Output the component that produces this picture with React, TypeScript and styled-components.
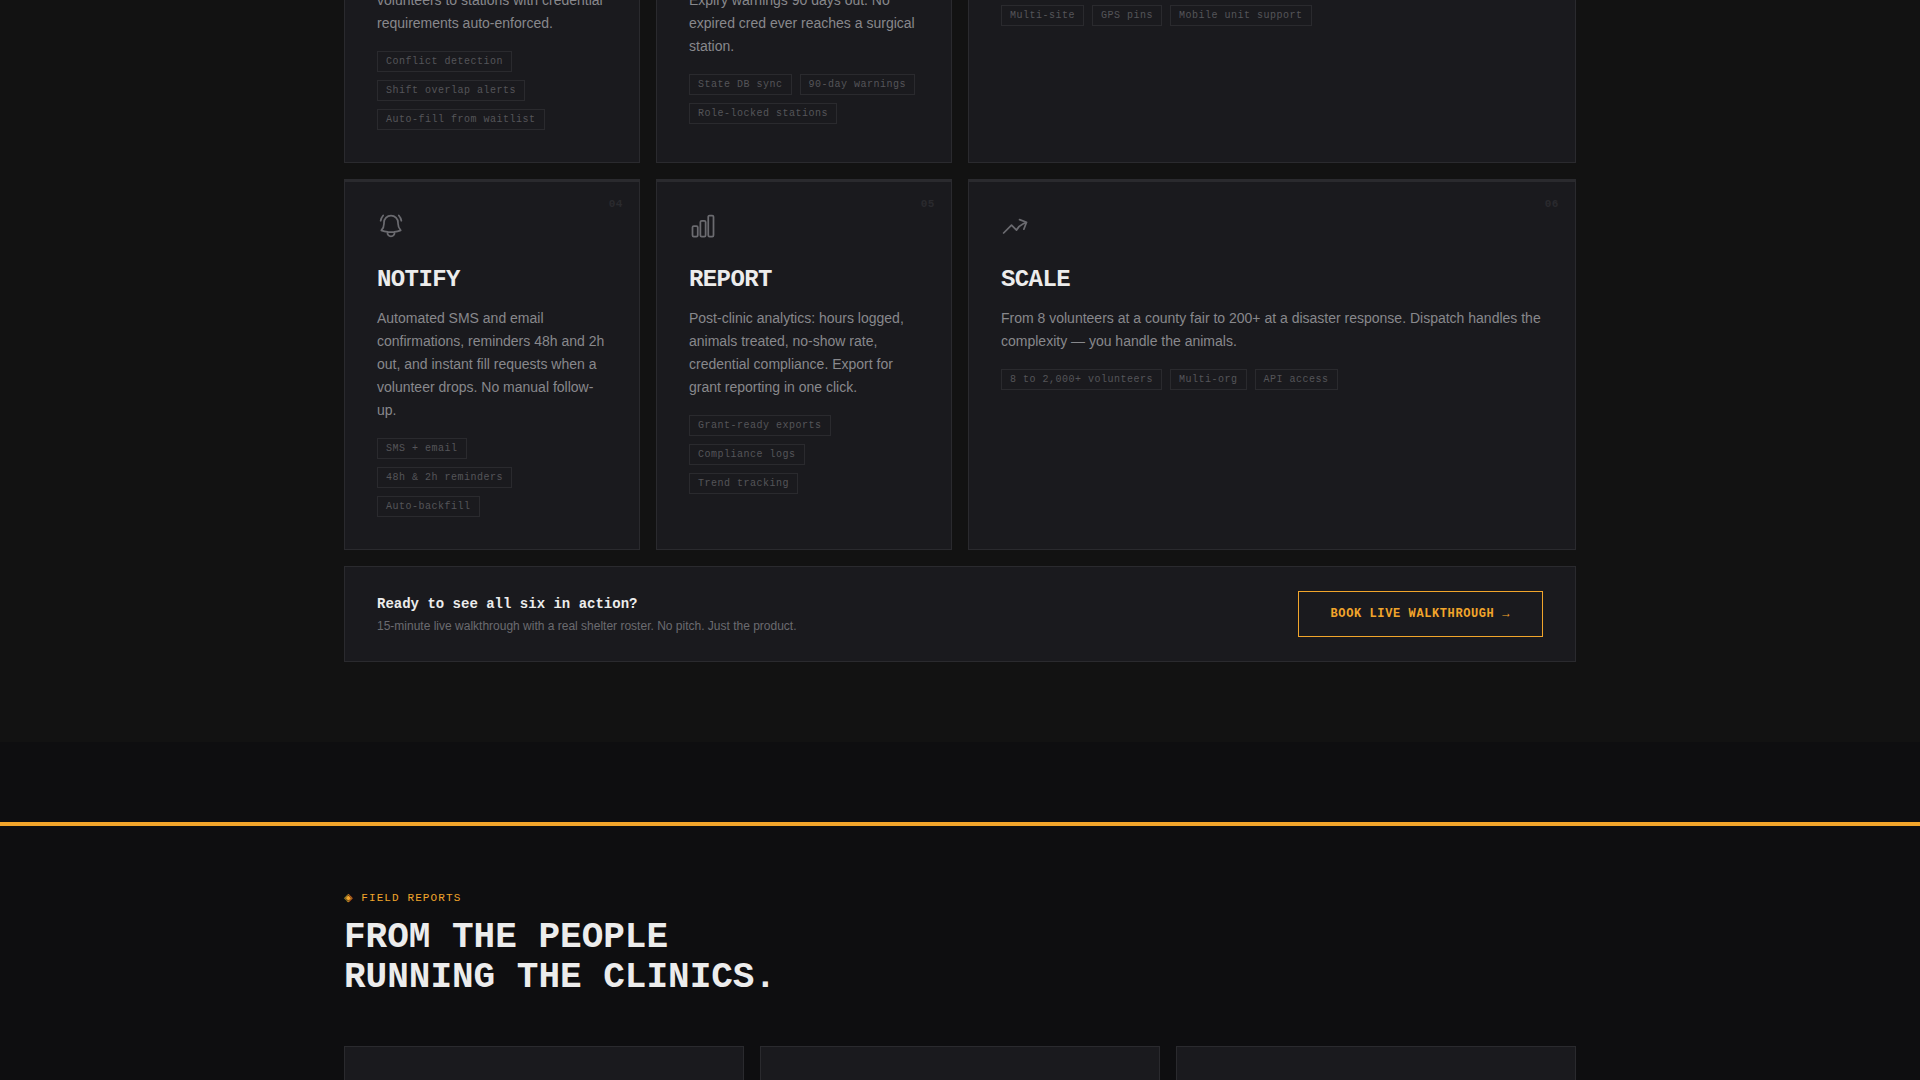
import React from "react";
import styled, { createGlobalStyle, css } from "styled-components";
import {
  HiOutlineArrowTrendingUp,
  HiOutlineBellAlert,
  HiOutlineChartBar,
} from "react-icons/hi2";

const color = {
  ink: "#0e0e10",
  band: "#121212",
  card: "#1a1a1e",
  line: "#2a2a2e",
  amber: "#f2a52b",
  bright: "#ececec",
  text: "#88888c",
  muted: "#6b6b70",
  faint: "#555559",
};

const sans = `"Liberation Sans", Arial, sans-serif`;
const mono = `"Liberation Mono", "Courier New", "DejaVu Sans", monospace`;

const GlobalStyle = createGlobalStyle`
  *, *::before, *::after { box-sizing: border-box; }
  body { margin: 0; background: ${color.ink}; color: ${color.bright}; font-family: ${sans}; }
  h2, h3, p, ul { margin: 0; padding: 0; }
  ul { list-style: none; }
`;

const Page = styled.div`
  display: flex;
  flex-direction: column;
  min-height: 100vh;
`;

const Features = styled.section`
  padding-bottom: 80px;
  background: ${color.band};
`;

const container = css`
  width: 100%;
  max-width: 1280px;
  margin: 0 auto;
  padding: 0 24px;
`;

const FeatureGrid = styled.div`
  ${container}
  display: grid;
  grid-template-columns: repeat(4, 1fr);
  gap: 16px;
`;

const Card = styled.article<{ $wide?: boolean; $continued?: boolean }>`
  position: relative;
  display: flex;
  flex-direction: column;
  padding: 32px;
  background: ${color.card};
  border: 1px solid ${color.line};
  ${(p) => p.$wide && "grid-column: span 2;"}
  ${(p) =>
    p.$continued
      ? "border-top: 0; padding-top: 0;"
      : `&::before {
          content: "";
          position: absolute;
          inset: 0 0 auto;
          height: 2px;
          background: ${color.line};
        }`}
`;

const CardNumber = styled.span`
  position: absolute;
  top: 16px;
  right: 16px;
  color: ${color.line};
  font: 700 11px/16px ${mono};
  letter-spacing: 0.05em;
`;

const IconSlot = styled.div`
  height: 28px;
  margin-bottom: 24px;
  color: ${color.muted};

  svg {
    display: block;
    width: 28px;
    height: 28px;
  }
`;

const CardTitle = styled.h3`
  margin-bottom: 11px;
  font: 700 24px/32px ${mono};
  letter-spacing: -0.025em;
`;

const CardText = styled.p<{ $continued?: boolean }>`
  margin: ${(p) => (p.$continued ? "-11px" : "0")} 0 16px;
  color: ${color.text};
  font-size: 14px;
  line-height: 23px;
`;

const TagList = styled.ul<{ $first?: boolean }>`
  display: flex;
  flex-wrap: wrap;
  gap: 8px;
  padding-top: ${(p) => (p.$first ? "5px" : "0")};
`;

const Tag = styled.li`
  padding: 2px 8px;
  border: 1px solid ${color.line};
  color: ${color.faint};
  font: 10px/15px ${mono};
  letter-spacing: 0.05em;
`;

const Cta = styled.aside`
  grid-column: 1 / -1;
  display: flex;
  align-items: center;
  justify-content: space-between;
  gap: 24px;
  padding: 24px 32px;
  background: ${color.card};
  border: 1px solid ${color.line};
`;

const CtaTitle = styled.p`
  margin-bottom: 4px;
  font: 700 14px/20px ${mono};
`;

const CtaNote = styled.p`
  color: ${color.muted};
  font-size: 12px;
  line-height: 16px;
`;

const CtaButton = styled.button`
  padding: 14px 32px;
  border: 1px solid ${color.amber};
  background: transparent;
  color: ${color.amber};
  font: 700 12px/16px ${mono};
  letter-spacing: 0.05em;
  white-space: nowrap;
  cursor: pointer;
`;

const Reports = styled.section`
  flex: 1;
  display: flex;
  flex-direction: column;
  margin-top: 80px;
  padding-top: 64px;
  border-top: 4px solid ${color.amber};
`;

const ReportsHeader = styled.header`
  ${container}
  margin-bottom: 48px;
`;

const Eyebrow = styled.p`
  margin-bottom: 12px;
  color: ${color.amber};
  font: 11px/16px ${mono};
  letter-spacing: 0.1em;
`;

const Heading = styled.h2`
  font: 700 36px/40px ${mono};
`;

const ReportGrid = styled.div`
  ${container}
  flex: 1;
  display: grid;
  grid-template-columns: repeat(3, 1fr);
  gap: 16px;
  min-height: 34px;
`;

const ReportCard = styled.article`
  background: ${color.card};
  border: 1px solid ${color.line};
  border-bottom: 0;
`;

type Feature = {
  number?: string;
  icon?: React.ReactNode;
  title?: string;
  text?: string;
  tags: string[];
  wide?: boolean;
};

const features: Feature[] = [
  {
    text: "volunteers to stations with credential requirements auto-enforced.",
    tags: ["Conflict detection", "Shift overlap alerts", "Auto-fill from waitlist"],
  },
  {
    text: "Expiry warnings 90 days out. No expired cred ever reaches a surgical station.",
    tags: ["State DB sync", "90-day warnings", "Role-locked stations"],
  },
  {
    tags: ["Multi-site", "GPS pins", "Mobile unit support"],
    wide: true,
  },
  {
    number: "04",
    icon: <HiOutlineBellAlert />,
    title: "NOTIFY",
    text: "Automated SMS and email confirmations, reminders 48h and 2h out, and instant fill requests when a volunteer drops. No manual follow-up.",
    tags: ["SMS + email", "48h & 2h reminders", "Auto-backfill"],
  },
  {
    number: "05",
    icon: <HiOutlineChartBar />,
    title: "REPORT",
    text: "Post-clinic analytics: hours logged, animals treated, no-show rate, credential compliance. Export for grant reporting in one click.",
    tags: ["Grant-ready exports", "Compliance logs", "Trend tracking"],
  },
  {
    number: "06",
    icon: <HiOutlineArrowTrendingUp />,
    title: "SCALE",
    text: "From 8 volunteers at a county fair to 200+ at a disaster response. Dispatch handles the complexity — you handle the animals.",
    tags: ["8 to 2,000+ volunteers", "Multi-org", "API access"],
    wide: true,
  },
];

function FeatureCard({ number, icon, title, text, tags, wide }: Feature) {
  const continued = !title;
  return (
    <Card $wide={wide} $continued={continued}>
      {number && <CardNumber>{number}</CardNumber>}
      {icon && <IconSlot>{icon}</IconSlot>}
      {title && <CardTitle>{title}</CardTitle>}
      {text && <CardText $continued={continued}>{text}</CardText>}
      <TagList $first={!text}>
        {tags.map((tag) => (
          <Tag key={tag}>{tag}</Tag>
        ))}
      </TagList>
    </Card>
  );
}

export default function App() {
  return (
    <Page>
      <GlobalStyle />
      <Features>
        <FeatureGrid>
          {features.map((feature) => (
            <FeatureCard key={feature.tags[0]} {...feature} />
          ))}
          <Cta>
            <div>
              <CtaTitle>Ready to see all six in action?</CtaTitle>
              <CtaNote>
                15-minute live walkthrough with a real shelter roster. No pitch. Just the product.
              </CtaNote>
            </div>
            <CtaButton type="button">BOOK LIVE WALKTHROUGH →</CtaButton>
          </Cta>
        </FeatureGrid>
      </Features>
      <Reports>
        <ReportsHeader>
          <Eyebrow>◈ FIELD REPORTS</Eyebrow>
          <Heading>
            FROM THE PEOPLE
            <br />
            RUNNING THE CLINICS.
          </Heading>
        </ReportsHeader>
        <ReportGrid>
          <ReportCard />
          <ReportCard />
          <ReportCard />
        </ReportGrid>
      </Reports>
    </Page>
  );
}
